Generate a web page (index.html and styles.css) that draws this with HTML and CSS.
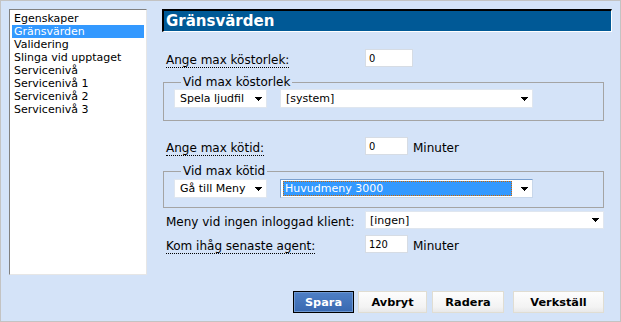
FILE: index.html
```html
<!DOCTYPE html>
<html lang="sv">
<head>
<meta charset="utf-8">
<title>Gränsvärden</title>
<link rel="stylesheet" href="styles.css">
</head>
<body>
<div class="window">
  <ul class="nav">
    <li>Egenskaper</li>
    <li class="active">Gränsvärden</li>
    <li>Validering</li>
    <li>Slinga vid upptaget</li>
    <li>Servicenivå</li>
    <li>Servicenivå 1</li>
    <li>Servicenivå 2</li>
    <li>Servicenivå 3</li>
  </ul>
  <div class="main">
    <h1 class="title">Gränsvärden</h1>
    <div class="form">
      <div class="row row-queue">
        <span class="label"><span class="hint">Ange max köstorlek:</span></span>
        <input class="field field-wide" type="text" value="0">
      </div>
      <fieldset class="group group-queue">
        <legend>Vid max köstorlek</legend>
        <div class="pair">
          <div class="combo combo-action"><span class="combo-text">Spela ljudfil</span><svg class="arrow" width="7" height="4" viewBox="0 0 7 4"><polygon points="0,0 7,0 3.5,4" fill="#000"/></svg></div>
          <div class="combo combo-target"><span class="combo-text">[system]</span><svg class="arrow" width="7" height="4" viewBox="0 0 7 4"><polygon points="0,0 7,0 3.5,4" fill="#000"/></svg></div>
        </div>
      </fieldset>
      <div class="row row-time">
        <span class="label"><span class="hint">Ange max kötid:</span></span>
        <input class="field" type="text" value="0">
        <span class="unit">Minuter</span>
      </div>
      <fieldset class="group group-time">
        <legend>Vid max kötid</legend>
        <div class="pair">
          <div class="combo combo-action"><span class="combo-text">Gå till Meny</span><svg class="arrow" width="7" height="4" viewBox="0 0 7 4"><polygon points="0,0 7,0 3.5,4" fill="#000"/></svg></div>
          <div class="combo combo-target combo-focus"><span class="hl">Huvudmeny 3000</span><svg class="arrow" width="7" height="4" viewBox="0 0 7 4"><polygon points="0,0 7,0 3.5,4" fill="#000"/></svg></div>
        </div>
      </fieldset>
      <div class="row row-menu">
        <span class="label">Meny vid ingen inloggad klient:</span>
        <div class="combo combo-fill"><span class="combo-text">[ingen]</span><svg class="arrow" width="7" height="4" viewBox="0 0 7 4"><polygon points="0,0 7,0 3.5,4" fill="#000"/></svg></div>
      </div>
      <div class="row row-agent">
        <span class="label"><span class="hint">Kom ihåg senaste agent:</span></span>
        <input class="field" type="text" value="120">
        <span class="unit">Minuter</span>
      </div>
      <div class="actions">
        <button class="btn btn-primary" type="button">Spara</button>
        <button class="btn btn-cancel" type="button">Avbryt</button>
        <button class="btn btn-delete" type="button">Radera</button>
        <button class="btn btn-apply" type="button">Verkställ</button>
      </div>
    </div>
  </div>
</div>
</body>
</html>
```
FILE: styles.css
```css
* { box-sizing: border-box; }
html, body { margin: 0; padding: 0; }
body {
  font-family: "DejaVu Sans", Verdana, sans-serif;
  font-size: 12px;
  color: #000;
  background: #d4e3f8;
}
.window {
  width: 621px;
  height: 322px;
  border: 1px solid #c3c3c3;
  background: #d4e3f8;
  padding: 8px;
  display: flex;
  gap: 15px;
}
.nav {
  width: 138px;
  height: 266px;
  flex: none;
  margin: 0;
  padding: 2px;
  list-style: none;
  background: #fff;
  border: 1px solid;
  border-color: #808080 #e6e6e6 #e6e6e6 #808080;
  font-size: 11px;
}
.nav li {
  line-height: 13px;
  padding-left: 2px;
  white-space: nowrap;
}
.nav li.active { background: #3399ff; color: #fff; }

.main {
  flex: 1;
  display: flex;
  flex-direction: column;
  min-width: 0;
}
.title {
  margin: 0;
  height: 23px;
  border-style: solid;
  border-width: 2px 1px 1px 2px;
  border-color: #000 #fff #fff #000;
  background: #005996;
  color: #fff;
  font-size: 15px;
  font-weight: bold;
  line-height: 20px;
  padding-left: 2px;
  white-space: nowrap;
}
.form {
  flex: 1;
  display: flex;
  flex-direction: column;
  margin-right: 8px;
}
.row {
  display: flex;
  align-items: flex-end;
  padding-left: 4px;
}
.label {
  width: 199px;
  flex: none;
  line-height: 14px;
  white-space: nowrap;
}
.hint { border-bottom: 1px dotted #000; }
.unit { margin-left: 5px; line-height: 14px; }
.field {
  width: 43px;
  height: 18px;
  margin: 0;
  padding: 0 3px;
  border: 1px solid #d6dce4;
  background: #fff;
  font-family: "DejaVu Sans Condensed", "Liberation Sans", sans-serif;
  font-size: 11px;
  color: #000;
  outline: none;
}
.field-wide { width: 48px; }
.row-queue { margin-top: 17px; height: 18px; }
.row-time { margin-top: 16px; height: 18px; }
.row-menu { margin-top: 3px; height: 18px; }
.row-agent { margin-top: 6px; height: 18px; }

.group {
  margin: 9px 0 0 1px;
  padding: 0 0 12px 10px;
  border: 1px solid #a4a4a4;
  min-width: 0;
}
.group-time { margin-top: 10px; padding-top: 1px; padding-bottom: 9px; }
.group legend {
  padding: 0 2px;
  margin-left: 7px;
  line-height: 13px;
  font-size: 12px;
  white-space: nowrap;
}
.pair { display: flex; gap: 13px; }

.combo {
  display: flex;
  align-items: center;
  height: 19px;
  background: #fff;
  border: 1px solid #dfe6ef;
  padding: 0 4px 0 5px;
  font-size: 11px;
  white-space: nowrap;
}
.combo-action { width: 93px; }
.combo-target { width: 253px; }
.combo-fill { flex: 1; height: 18px; padding-left: 4px; }
.combo-text { flex: 1; line-height: 13px; }
.arrow { flex: none; display: block; shape-rendering: crispEdges; }
.combo-focus {
  border-color: #7aa0cf #c8d7ea #c8d7ea #7aa0cf;
  padding-left: 2px;
}
.hl {
  flex: 1;
  height: 15px;
  margin-right: 9px;
  background: #3399ff;
  color: #fff;
  border: 1px dotted #cc6600;
  padding-left: 1px;
  line-height: 13px;
}

.actions {
  margin-top: auto;
  display: flex;
  justify-content: flex-end;
}
.btn {
  height: 22px;
  margin: 0 0 0 5px;
  padding: 0;
  font-family: "DejaVu Sans", Verdana, sans-serif;
  font-size: 11.3px;
  font-weight: bold;
  color: #000;
  border: 1px solid #e0ddd2;
  background: linear-gradient(#fdfdfd, #f3f3f3 75%, #e8e8e8);
  text-align: center;
}
.btn-primary {
  width: 61px;
  color: #fff;
  border-color: #000;
  background: linear-gradient(#4f80c6, #3868b0);
  box-shadow: inset 0 0 0 1px #6e98d2;
}
.btn-cancel { width: 69px; margin-left: 4px; }
.btn-delete { width: 72px; }
.btn-apply { width: 91px; margin-left: 9px; }
```
